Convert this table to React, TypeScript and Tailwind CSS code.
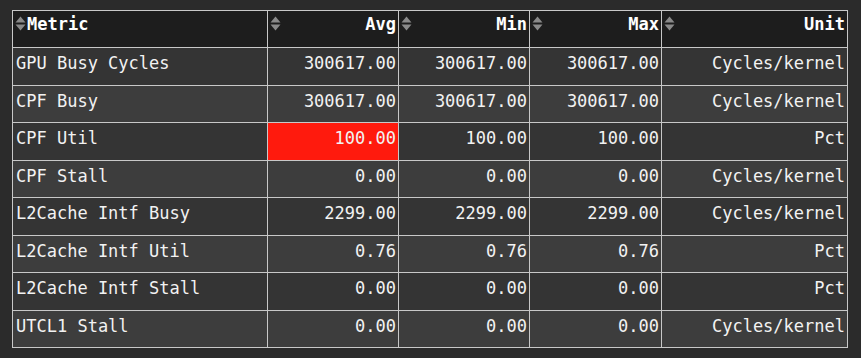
import React from "react";

interface Row {
  metric: string;
  avg: string;
  min: string;
  max: string;
  unit: string;
  hot?: boolean;
}

const rows: Row[] = [
  { metric: "GPU Busy Cycles", avg: "300617.00", min: "300617.00", max: "300617.00", unit: "Cycles/kernel" },
  { metric: "CPF Busy", avg: "300617.00", min: "300617.00", max: "300617.00", unit: "Cycles/kernel" },
  { metric: "CPF Util", avg: "100.00", min: "100.00", max: "100.00", unit: "Pct", hot: true },
  { metric: "CPF Stall", avg: "0.00", min: "0.00", max: "0.00", unit: "Cycles/kernel" },
  { metric: "L2Cache Intf Busy", avg: "2299.00", min: "2299.00", max: "2299.00", unit: "Cycles/kernel" },
  { metric: "L2Cache Intf Util", avg: "0.76", min: "0.76", max: "0.76", unit: "Pct" },
  { metric: "L2Cache Intf Stall", avg: "0.00", min: "0.00", max: "0.00", unit: "Pct" },
  { metric: "UTCL1 Stall", avg: "0.00", min: "0.00", max: "0.00", unit: "Cycles/kernel" },
];

const SortIcon = () => (
  <svg width="11" height="15" viewBox="0 0 11 15" className="shrink-0">
    <path d="M5.5 0.5 L10.5 6.5 L0.5 6.5 Z" fill="#8a8a8a" />
    <path d="M0.5 8.5 L10.5 8.5 L5.5 14.5 Z" fill="#8a8a8a" />
  </svg>
);

const HeaderCell = ({ label, left }: { label: string; left?: boolean }) => (
  <div className="flex items-start h-[37px] pt-[5px] pl-[2px] pr-[2px] border-r border-b border-[#c8c8c8] bg-[#1d1d1d]">
    <SortIcon />
    <span className={`font-bold text-white leading-[20px] -mt-[2px] ${left ? "ml-[1px]" : "ml-auto"}`}>{label}</span>
  </div>
);

const Cell = ({ children, left, bg }: { children: React.ReactNode; left?: boolean; bg: string }) => (
  <div
    className={`h-[37.5px] pt-[5px] border-r border-b border-[#c8c8c8] leading-[20px] text-[#f2f2f2] whitespace-nowrap ${
      left ? "pl-[3px]" : "text-right pr-[2px]"
    } ${bg}`}
  >
    {children}
  </div>
);

export default function App() {
  return (
    <div className="w-[861px] h-[358px] bg-[#2b2b2b] pt-[10px] pl-[12px] overflow-hidden">
      <div
        className="grid grid-cols-[255px_131px_131px_132px_186px] w-[836px] border-l border-t border-[#c8c8c8] text-[17px]"
        style={{ fontFamily: '"DejaVu Sans Mono", "Liberation Mono", monospace' }}
      >
        <HeaderCell label="Metric" left />
        <HeaderCell label="Avg" />
        <HeaderCell label="Min" />
        <HeaderCell label="Max" />
        <HeaderCell label="Unit" />
        {rows.map((r, i) => {
          const bg = i % 2 === 0 ? "bg-[#343434]" : "bg-[#3d3d3d]";
          return (
            <React.Fragment key={r.metric}>
              <Cell left bg={bg}>{r.metric}</Cell>
              <Cell bg={r.hot ? "bg-[#ff1a0d]" : bg}>{r.avg}</Cell>
              <Cell bg={bg}>{r.min}</Cell>
              <Cell bg={bg}>{r.max}</Cell>
              <Cell bg={bg}>{r.unit}</Cell>
            </React.Fragment>
          );
        })}
      </div>
    </div>
  );
}
